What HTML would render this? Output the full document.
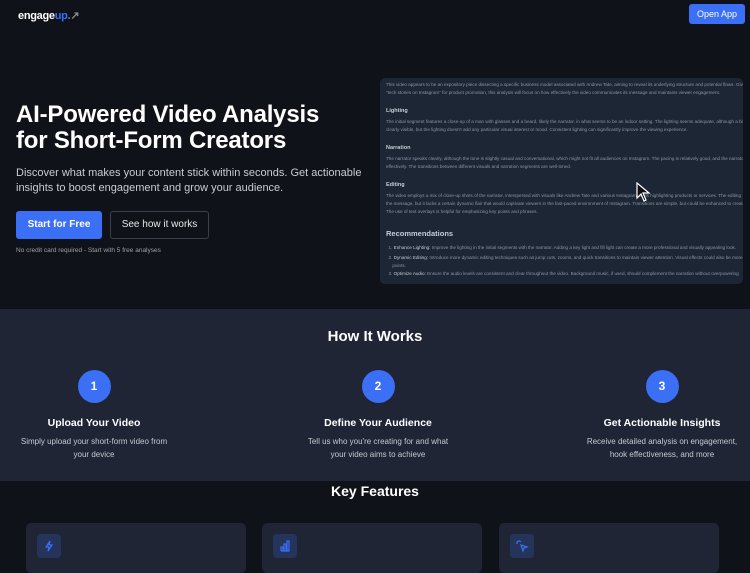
<!DOCTYPE html>
<html><head><style>
*{margin:0;padding:0;box-sizing:border-box}
body{width:750px;height:560px;overflow:hidden;background:#0f1219;font-family:"Liberation Sans",sans-serif;color:#fff;position:relative}
.abs{position:absolute}
.logo{left:18px;top:9px;font-size:11px;font-weight:bold;letter-spacing:-0.3px}
.btn-open{left:689px;top:4px;width:56px;height:20px;background:#3b6ff5;border-radius:3px;font-size:9px;line-height:20px;text-align:center}
h1{position:absolute;left:16px;top:102px;font-size:24px;line-height:26px;font-weight:bold;letter-spacing:-0.2px}
.sub{left:16px;top:166px;font-size:11px;line-height:15px;color:#c9ccd3}
.b1{left:16px;top:211px;width:86px;height:28px;background:#3b6ff5;border-radius:3px;font-size:10px;font-weight:bold;line-height:28px;text-align:center}
.b2{left:110px;top:211px;width:99px;height:28px;border:1px solid #3a3f4b;border-radius:3px;font-size:10px;line-height:26px;text-align:center;color:#e6e7ea}
.note{left:16px;top:247px;font-size:6.5px;color:#9ca0aa}
.shot{left:380px;top:78px;width:363px;height:206px;background:#1d2635;border-radius:5px;overflow:hidden;padding:3px 0 0 6px;color:#8a95a6;font-size:4.6px;line-height:8px;white-space:nowrap}
.shot b{display:block;color:#c5ccd6;font-size:5.5px;margin:10px 0 3px}
.shot .r{color:#c5ccd6;font-size:7.5px;font-weight:bold;margin:14px 0 6px}
.how{left:0;top:309px;width:750px;height:172px;background:#1f2535}
.how h2{position:absolute;top:19px;width:100%;text-align:center;font-size:15px}
.step{position:absolute;top:61px;width:200px;text-align:center}
.circ{width:33px;height:33px;border-radius:50%;background:#3b6ff5;margin:0 auto;font-weight:bold;font-size:12px;line-height:33px}
.step h3{font-size:10.5px;margin-top:14px}
.step p{font-size:8px;line-height:13px;color:#c5c9d1;margin-top:6px}
.kf{left:0;top:483px;width:750px;text-align:center;font-size:14px;font-weight:bold}
.card{top:523px;width:220px;height:50px;background:#1f2535;border-radius:5px}
.ic{position:absolute;left:11px;top:11px;width:24px;height:24px;background:#25345a;border-radius:4px}
</style></head><body>
<div class="abs logo">engage<span style="color:#3b6ff5">up</span><span style="color:#888">.↗</span></div>
<div class="abs btn-open">Open App</div>
<h1>AI-Powered Video Analysis<br>for Short-Form Creators</h1>
<div class="abs sub">Discover what makes your content stick within seconds. Get actionable<br>insights to boost engagement and grow your audience.</div>
<div class="abs b1">Start for Free</div>
<div class="abs b2">See how it works</div>
<div class="abs note">No credit card required - Start with 5 free analyses</div>
<div class="abs shot">
This video appears to be an expository piece dissecting a specific business model associated with Andrew Tate, aiming to reveal its underlying structure and potential flaws. Given<br>"tech stories on Instagram" for product promotion, this analysis will focus on how effectively the video communicates its message and maintains viewer engagement.
<b>Lighting</b>The initial segment features a close-up of a man with glasses and a beard, likely the narrator, in what seems to be an indoor setting. The lighting seems adequate, although a bit<br>clearly visible, but the lighting doesn't add any particular visual interest or mood. Consistent lighting can significantly improve the viewing experience.
<b>Narration</b>The narrator speaks clearly, although the tone is slightly casual and conversational, which might not fit all audiences on Instagram. The pacing is relatively good, and the narrator<br>effectively. The transitions between different visuals and narration segments are well-timed.
<b>Editing</b>The video employs a mix of close-up shots of the narrator, interspersed with visuals like Andrew Tate and various Instagram posts highlighting products or services. The editing<br>the message, but it lacks a certain dynamic flair that would captivate viewers in the fast-paced environment of Instagram. Transitions are simple, but could be enhanced to create<br>The use of text overlays is helpful for emphasizing key points and phrases.
<div class="r">Recommendations</div>
&nbsp;&nbsp;1. <span style="color:#c5ccd6">Enhance Lighting:</span> Improve the lighting in the initial segments with the narrator. Adding a key light and fill light can create a more professional and visually appealing look.<br>
<div style="height:2px"></div>&nbsp;&nbsp;2. <span style="color:#c5ccd6">Dynamic Editing:</span> Introduce more dynamic editing techniques such as jump cuts, zooms, and quick transitions to maintain viewer attention. Visual effects could also be more<br>&nbsp;&nbsp;&nbsp;&nbsp;&nbsp;points.<br>
&nbsp;&nbsp;3. <span style="color:#c5ccd6">Optimize Audio:</span> Ensure the audio levels are consistent and clear throughout the video. Background music, if used, should complement the narration without overpowering
<svg style="position:absolute;left:256px;top:104px" width="14" height="20" viewBox="0 0 14 20"><path d="M1 1 L1 16 L5 12 L8 19 L10 18 L7 11 L13 11 Z" fill="#111" stroke="#fff" stroke-width="1.2"/></svg>
</div>
<div class="abs how">
<h2>How It Works</h2>
<div class="step" style="left:-6px"><div class="circ">1</div><h3>Upload Your Video</h3><p>Simply upload your short-form video from<br>your device</p></div>
<div class="step" style="left:278px"><div class="circ">2</div><h3>Define Your Audience</h3><p>Tell us who you're creating for and what<br>your video aims to achieve</p></div>
<div class="step" style="left:562px"><div class="circ">3</div><h3>Get Actionable Insights</h3><p>Receive detailed analysis on engagement,<br>hook effectiveness, and more</p></div>
</div>
<div class="abs kf">Key Features</div>
<div class="abs card" style="left:26px"><div class="ic"><svg width="24" height="24" viewBox="0 0 24 24"><path d="M13 7 L9 13 H12 L11 17 L15 11 H12 Z" fill="none" stroke="#3b6ff5" stroke-width="1.2"/></svg></div></div>
<div class="abs card" style="left:262px"><div class="ic"><svg width="24" height="24" viewBox="0 0 24 24"><path d="M8 17 V13 H10 V17 M11 17 V10 H13 V17 M14 17 V7 H16 V17 H8" fill="none" stroke="#3b6ff5" stroke-width="1.2"/></svg></div></div>
<div class="abs card" style="left:499px"><div class="ic"><svg width="24" height="24" viewBox="0 0 24 24"><path d="M11 11 L17 13 L14 14 L13 17 Z M9 6 V8 M6 9 H8 M7 7 L8 8 M11 7 L10 8" fill="none" stroke="#3b6ff5" stroke-width="1.2"/></svg></div></div>
</body></html>
